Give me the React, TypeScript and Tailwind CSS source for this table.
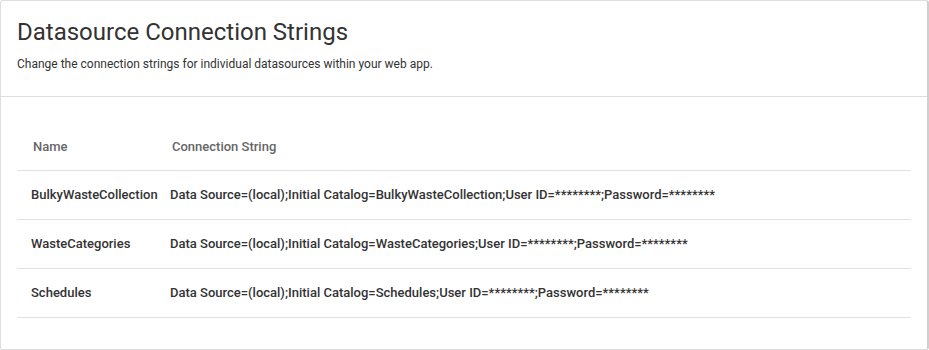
import React from 'react'

const rows = [
  {
    name: 'BulkyWasteCollection',
    conn: 'Data Source=(local);Initial Catalog=BulkyWasteCollection;User ID=********;Password=********',
  },
  {
    name: 'WasteCategories',
    conn: 'Data Source=(local);Initial Catalog=WasteCategories;User ID=********;Password=********',
  },
  {
    name: 'Schedules',
    conn: 'Data Source=(local);Initial Catalog=Schedules;User ID=********;Password=********',
  },
]

export default function App() {
  return (
    <div className="h-[350px] w-[929px] bg-white font-['Roboto',sans-serif] text-[#333]">
      <div className="h-[350px] w-[929px] rounded-[3px] border border-[#dedede] border-r-2 border-r-[#cfcfcf] bg-white">
        <div className="h-[96px] border-b border-[#dedede] px-4 pt-[16px]">
          <h1 className="text-[24px] leading-[30px] font-normal text-[#333]">Datasource Connection Strings</h1>
          <p className="mt-[9px] text-[12px] leading-[16px] text-[#333]">
            Change the connection strings for individual datasources within your web app.
          </p>
        </div>
        <div className="px-4 pt-[27px]">
          <table className="w-full table-fixed border-collapse text-[13px]">
            <thead>
              <tr className="h-[46px] border-b border-[#e2e2e2]">
                <th className="w-[139px] pl-4 text-left font-medium text-[#666]">Name</th>
                <th className="pl-4 text-left font-medium text-[#666]">Connection String</th>
              </tr>
            </thead>
            <tbody>
              {rows.map((r) => (
                <tr key={r.name} className="h-[49px] border-b border-[#e2e2e2]">
                  <td className="whitespace-nowrap pl-[14px] font-medium text-[#333]">{r.name}</td>
                  <td className="whitespace-nowrap pl-[14px] font-medium text-[#333]">{r.conn}</td>
                </tr>
              ))}
            </tbody>
          </table>
        </div>
      </div>
    </div>
  )
}
